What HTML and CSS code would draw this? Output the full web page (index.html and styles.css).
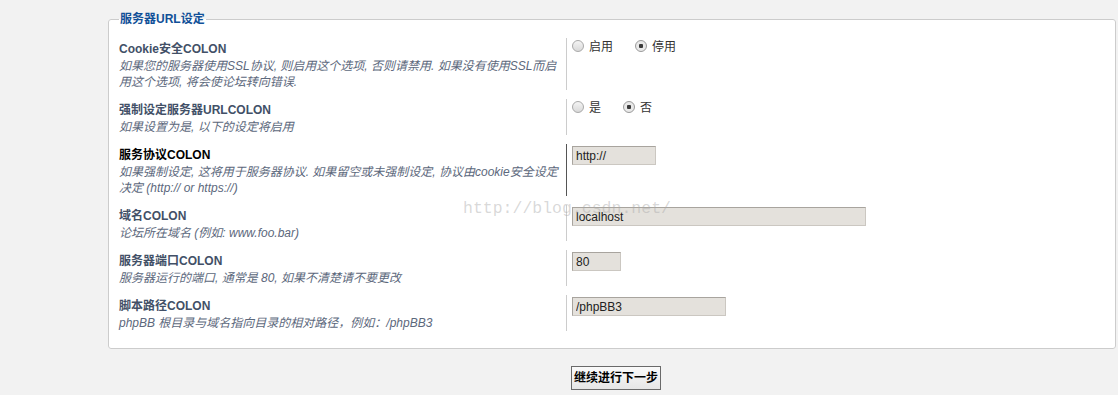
FILE: index.html
```html
<!DOCTYPE html>
<html lang="zh">
<head>
<meta charset="utf-8">
<title>服务器URL设定</title>
<link rel="stylesheet" href="styles.css">
</head>
<body>
<div class="page">
  <fieldset class="settings">
    <legend>服务器URL设定</legend>
    <dl class="row">
      <dt><label class="title">Cookie安全COLON</label><span class="explain two">如果您的服务器使用SSL协议, 则启用这个选项, 否则请禁用. 如果没有使用SSL而启<br>用这个选项, 将会使论坛转向错误.</span></dt>
      <dd class="choices">
        <label class="choice"><input type="radio" name="cookie_secure" value="1"> 启用</label>
        <label class="choice"><input type="radio" name="cookie_secure" value="0" checked> 停用</label>
      </dd>
    </dl>
    <dl class="row">
      <dt><label class="title">强制设定服务器URLCOLON</label><span class="explain">如果设置为是, 以下的设定将启用</span></dt>
      <dd class="choices">
        <label class="choice"><input type="radio" name="force_server_vars" value="1"> 是</label>
        <label class="choice"><input type="radio" name="force_server_vars" value="0" checked> 否</label>
      </dd>
    </dl>
    <dl class="row active">
      <dt><label class="title">服务协议COLON</label><span class="explain two">如果强制设定, 这将用于服务器协议. 如果留空或未强制设定, 协议由cookie安全设定<br>决定 (http:// or https://)</span></dt>
      <dd><input class="text w-proto" type="text" value="http://"></dd>
    </dl>
    <dl class="row">
      <dt><label class="title">域名COLON</label><span class="explain">论坛所在域名 (例如: www.foo.bar)</span></dt>
      <dd><input class="text w-name" type="text" value="localhost"></dd>
    </dl>
    <dl class="row">
      <dt><label class="title">服务器端口COLON</label><span class="explain">服务器运行的端口, 通常是 80, 如果不清楚请不要更改</span></dt>
      <dd><input class="text w-port" type="text" value="80"></dd>
    </dl>
    <dl class="row">
      <dt><label class="title">脚本路径COLON</label><span class="explain">phpBB 根目录与域名指向目录的相对路径，例如：/phpBB3</span></dt>
      <dd><input class="text w-path" type="text" value="/phpBB3"></dd>
    </dl>
  </fieldset>
  <div class="submit-buttons"><button class="button1" type="button">继续进行下一步</button></div>
  <div class="watermark">http://blog.csdn.net/</div>
</div>
</body>
</html>
```

FILE: styles.css
```css
html, body {
  margin: 0;
  padding: 0;
  background: #f2f2f2;
}

body {
  font-family: "Liberation Sans", Arial, "Noto Sans CJK SC", sans-serif;
  font-size: 12px;
  color: #333;
}

.page {
  position: relative;
  padding: 11px 2px 0 108px;
  height: 384px;
}

.settings {
  margin: 0;
  padding: 11px 0 8px 10px;
  border: 1px solid #cccccc;
  border-radius: 3px;
  background: #ffffff;
  min-inline-size: 0;
}

.settings legend {
  padding: 0 1px;
  margin-left: 0;
  height: 16px;
  font-weight: bold;
  font-size: 12px;
  line-height: 16px;
  color: #115098;
}

.row {
  display: flex;
  margin: 0 0 9px 0;
}

.row dt {
  width: 447px;
  flex: none;
  padding: 2px 0 0 0;
}

.title {
  display: block;
  height: 18px;
  font-weight: bold;
  line-height: 18px;
  color: #425067;
}

.explain {
  display: block;
  height: 16px;
  font-style: italic;
  line-height: 16px;
  color: #5c687c;
  white-space: nowrap;
}

.explain.two {
  height: 32px;
}

.row dd {
  margin: 0;
  padding: 2px 0 0 5px;
  border-left: 1px solid #cccccc;
  flex: 1;
}

.row.active .title {
  color: #000000;
}

.row.active dd {
  border-left-color: #555555;
}

.choices {
  display: flex;
  align-items: flex-start;
}

.row dd.choices {
  padding-top: 0;
}

.choice {
  display: inline-flex;
  align-items: center;
  height: 18px;
  line-height: 18px;
  color: #333;
  margin-right: 22px;
}

.choice input {
  -webkit-appearance: none;
  appearance: none;
  width: 12px;
  height: 12px;
  margin: 0 5px 0 0;
  border: 1px solid #a9a9a9;
  border-radius: 50%;
  background: linear-gradient(#f4f4f4, #d9d9d9);
  box-sizing: border-box;
  position: relative;
  top: -1px;
}

.choice input:checked {
  background: radial-gradient(circle, #3a3a3a 0 2px, #e9e9e9 2.5px 100%);
  border-color: #9a9a9a;
}

.text {
  display: block;
  box-sizing: border-box;
  height: 19px;
  margin: 0;
  padding: 0 3px;
  border: 1px solid;
  border-color: #a8a49e #cbc7c1 #cbc7c1 #a8a49e;
  background: #e4e1dc;
  font-family: "Liberation Sans", Arial, sans-serif;
  font-size: 12px;
  color: #222;
}

.w-proto { width: 84px; }
.w-name { width: 294px; }
.w-port { width: 49px; }
.w-path { width: 154px; }

.submit-buttons {
  padding: 17px 0 0 463px;
}

.button1 {
  display: block;
  box-sizing: border-box;
  width: 90px;
  height: 24px;
  padding: 0;
  border: 1px solid #6a6a6a;
  background: linear-gradient(#fafafa, #e6e6e6);
  font-family: "Liberation Sans", "Noto Sans CJK SC", sans-serif;
  font-size: 12px;
  font-weight: bold;
  line-height: 22px;
  color: #000;
}

.watermark {
  position: absolute;
  left: 463px;
  top: 199px;
  font-family: "Liberation Mono", "Courier New", monospace;
  font-size: 16.5px;
  color: rgba(170, 170, 170, 0.45);
  pointer-events: none;
}
```
